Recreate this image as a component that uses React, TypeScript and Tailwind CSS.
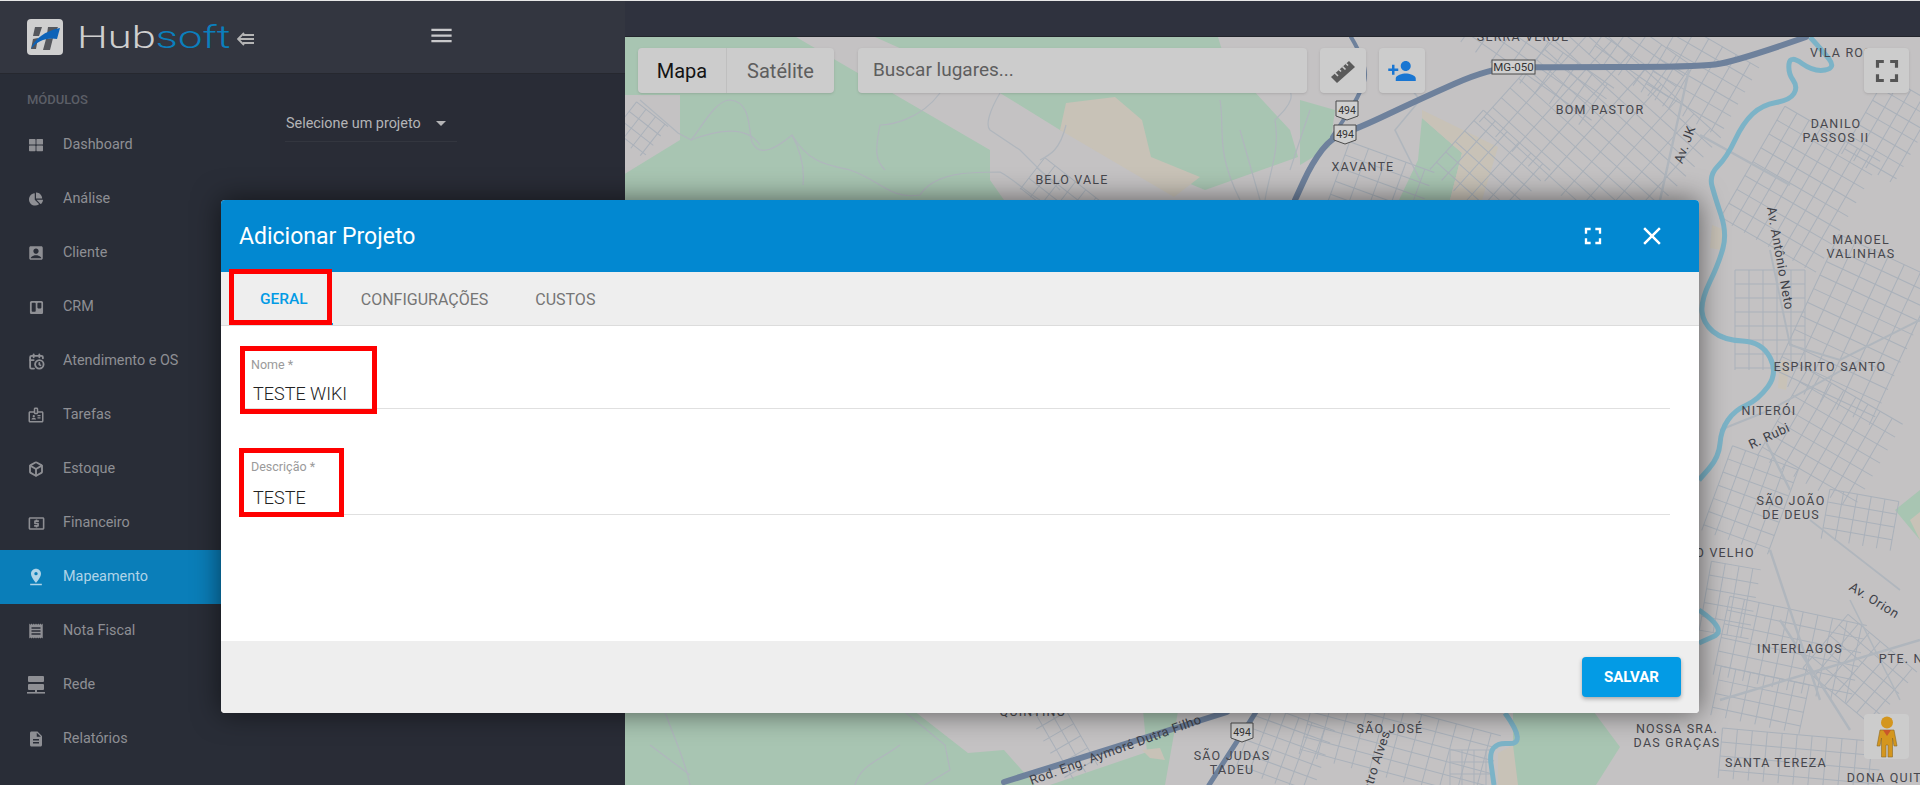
import React from 'react';
import { Box, CalendarClock } from 'lucide-react';
import {
    MdAccountBox,
    MdClose,
    MdDescription,
    MdFullscreen,
    MdMenu,
    MdOutlineBadge,
    MdOutlineLocalAtm,
    MdPersonAdd,
    MdPinDrop,
    MdReceipt,
} from 'react-icons/md';
import { FaChartPie, FaThLarge, FaTrello } from 'react-icons/fa';

const RedeIcon = () => (
    <svg width="20" height="20" viewBox="0 0 20 20" fill="currentColor">
        <rect x="2" y="1" width="16" height="6" rx="1" />
        <rect x="2" y="9" width="16" height="6" rx="1" />
        <rect x="9" y="15" width="2" height="3" />
        <rect x="1" y="17" width="18" height="1.6" />
    </svg>
);

const RulerIcon = () => (
    <svg width="26" height="26" viewBox="0 0 26 26" fill="#5a5a5a">
        <path d="M1,19 L19,3 L25,9 L7,25 Z" />
        <path d="M5,15 L8,18 M9,11.5 L11,13.5 M12.5,8.5 L15.5,11.5 M16,5.5 L18,7.5" stroke="#cccccc" strokeWidth="1.6" />
    </svg>
);

const menuItems = [
    { label: 'Dashboard', icon: <FaThLarge size={14} /> },
    { label: 'Análise', icon: <FaChartPie size={14} /> },
    { label: 'Cliente', icon: <MdAccountBox size={18} /> },
    { label: 'CRM', icon: <FaTrello size={15} /> },
    { label: 'Atendimento e OS', icon: <CalendarClock size={17} strokeWidth={2.6} /> },
    { label: 'Tarefas', icon: <MdOutlineBadge size={18} /> },
    { label: 'Estoque', icon: <Box size={16} strokeWidth={2.8} /> },
    { label: 'Financeiro', icon: <MdOutlineLocalAtm size={19} /> },
    { label: 'Mapeamento', icon: <MdPinDrop size={20} />, active: true },
    { label: 'Nota Fiscal', icon: <MdReceipt size={18} /> },
    { label: 'Rede', icon: <RedeIcon /> },
    { label: 'Relatórios', icon: <MdDescription size={18} /> },
];

// cx, cy, w, h, angle, step x, step y
const streetGrids = [
    [1600, 130, 190, 150, 42, 22, 13],
    [1490, 170, 90, 80, 42, 16, 14],
    [1380, 190, 90, 70, 20, 20, 14],
    [1530, 60, 170, 50, 35, 18, 13],
    [1640, 60, 90, 50, 35, 18, 13],
    [1700, 80, 90, 80, 30, 16, 14],
    [1800, 190, 110, 130, 30, 14, 16],
    [1855, 330, 110, 160, 25, 18, 15],
    [1770, 320, 70, 100, 0, 14, 14],
    [1890, 130, 60, 90, 30, 14, 14],
    [1830, 440, 110, 100, 30, 14, 15],
    [1750, 500, 70, 90, 20, 14, 14],
    [1860, 520, 70, 50, 10, 14, 13],
    [1730, 600, 50, 70, 10, 14, 14],
    [1790, 650, 140, 80, 12, 15, 14],
    [1760, 700, 90, 50, 12, 15, 14],
    [1860, 670, 90, 70, 40, 14, 14],
    [1800, 760, 160, 50, 5, 15, 14],
    [1400, 745, 190, 70, 15, 18, 13],
    [1470, 770, 40, 40, 0, 12, 12],
    [1285, 750, 80, 70, 20, 14, 13],
    [1060, 735, 90, 35, 60, 14, 14],
    [1060, 195, 70, 40, 38, 13, 13],
    [640, 130, 40, 40, 38, 12, 12],
];

const mapLabels: [string, number, number][] = [
    ['SERRA VERDE', 1523, 41],
    ['VILA ROSA', 1846, 57],
    ['BOM PASTOR', 1600, 114],
    ['DANILO', 1836, 128],
    ['PASSOS II', 1836, 142],
    ['XAVANTE', 1363, 171],
    ['BELO VALE', 1072, 184],
    ['MANOEL', 1861, 244],
    ['VALINHAS', 1861, 258],
    ['ESPIRITO SANTO', 1830, 371],
    ['NITERÓI', 1769, 415],
    ['SÃO JOÃO', 1791, 505],
    ['DE DEUS', 1791, 519],
    ['O VELHO', 1725, 557],
    ['INTERLAGOS', 1800, 653],
    ['PTE. NOVA', 1915, 663],
    ['QUINTINO', 1033, 716],
    ['SÃO JOSÉ', 1390, 733],
    ['NOSSA SRA.', 1677, 733],
    ['DAS GRAÇAS', 1677, 747],
    ['SÃO JUDAS', 1232, 760],
    ['TADEU', 1232, 774],
    ['SANTA TEREZA', 1776, 767],
    ['DONA QUITÉRIA', 1900, 782],
];

const roadLabels: [string, number, number, number][] = [
    ['Av. JK', 1689, 146, -70],
    ['Av. Antônio Neto', 1776, 259, 80],
    ['R. Rubi', 1771, 440, -25],
    ['Av. Orion', 1872, 604, 32],
    ['Castro Alves', 1378, 770, -72],
    ['Rod. Eng. Aymoré Dutra Filho', 1117, 754, -20],
];

// rounds a list of points into a curve through the midpoints
const smooth = (points: number[][]) => {
    let d = `M${points[0][0]},${points[0][1]}`;
    for (let i = 1; i < points.length - 1; i++) {
        const mx = (points[i][0] + points[i + 1][0]) / 2;
        const my = (points[i][1] + points[i + 1][1]) / 2;
        d += ` Q${points[i][0]},${points[i][1]} ${mx},${my}`;
    }
    const last = points[points.length - 1];
    return `${d} L${last[0]},${last[1]}`;
};

const river = [
    [1810, 37], [1822, 50], [1836, 68], [1814, 72], [1790, 55], [1788, 73], [1798, 87], [1790, 100], [1762, 105], [1743, 123],
    [1727, 157], [1709, 175], [1715, 197], [1727, 233], [1719, 263], [1701, 300], [1703, 323], [1723, 340], [1762, 342],
    [1778, 373], [1758, 400], [1735, 410], [1721, 430], [1719, 457], [1699, 480],
];

const Shield = ({ x, y }: { x: number; y: number }) => (
    <g transform={`translate(${x} ${y})`}>
        <path d="M-11,-9 H11 V6 L0,10 L-11,6 Z" fill="#cfcfcf" stroke="#4b4b4b" strokeWidth="1" />
        <text textAnchor="middle" y="4" fontSize="10.5" fill="#333">494</text>
    </g>
);

const MapBackground = () => (
    <svg className="h-full w-full" viewBox="625 37 1295 748" fontFamily="Roboto, sans-serif">
        <rect x="623" y="37" width="1297" height="748" fill="#c4c2c3" />
        <g fill="#a8c5b2">
            <polygon points="623,37 796,37 990,150 990,180 1004,200 1004,240 623,240 623,175 680,140 680,95 623,95" />
            <polygon points="875,37 1218,37 1225,60 1290,130 1298,157 1205,190 1060,130 1000,93" />
            <polygon points="1422,118 1462,153 1450,200 1399,200 1418,160" />
            <polygon points="1300,100 1335,110 1330,147 1300,165" />
            <polygon points="623,700 900,700 968,753 1004,750 1035,785 623,785" />
            <polygon points="1142,700 1180,700 1165,785 1050,785 1147,752" />
            <polygon points="1513,700 1585,700 1620,747 1596,785 1513,785" />
            <polygon points="1895,510 1920,490 1920,540" />
        </g>
        <g fill="#c8c2b7">
            <polygon points="1066,103 1115,97 1142,120 1151,157 1200,177 1174,197 1060,130" />
            <polygon points="1422,110 1498,147 1482,200 1450,200 1462,153 1422,118" />
            <polygon points="1498,753 1513,745 1518,785 1498,785" />
            <polygon points="1142,750 1160,748 1165,760 1150,758" />
            <polygon points="1910,520 1920,512 1920,540" />
            <polygon points="1712,225 1725,230 1722,250 1710,248" />
            <polygon points="1780,360 1790,362 1786,390 1778,388" />
        </g>
        <g stroke="#aab1ba" strokeWidth="1">
            {streetGrids.map(([cx, cy, w, h, angle, sx, sy], i) => (
                <g key={i} transform={`rotate(${angle} ${cx} ${cy})`}>
                    {Array.from({ length: Math.floor(w / sx) + 1 }, (_, n) => (
                        <line key={n} x1={cx - w / 2 + n * sx} y1={cy - h / 2} x2={cx - w / 2 + n * sx} y2={cy + h / 2} />
                    ))}
                    {Array.from({ length: Math.floor(h / sy) + 1 }, (_, n) => (
                        <line key={n} x1={cx - w / 2} y1={cy - h / 2 + n * sy} x2={cx + w / 2} y2={cy - h / 2 + n * sy} />
                    ))}
                </g>
            ))}
        </g>
        <g fill="none" stroke="#b0b6bd" strokeWidth="1.2">
            <path d="M640,100 L678,133 L691,140 C700,130 715,100 730,100 C752,102 748,130 752,142 C760,160 780,145 792,135 C810,165 830,165 850,170 C880,180 890,200 920,195 C935,172 970,172 1000,172 C1015,180 1030,195 1040,200" />
            <path d="M691,140 C730,125 750,130 760,145 M792,135 C800,150 805,165 803,185" />
            <path d="M940,93 C920,120 890,125 880,125 C875,150 875,160 885,170 M1000,93 C990,110 985,125 990,130 L1020,150 L1060,190" />
            <path d="M1066,125 C1060,150 1050,155 1040,160 M1220,100 C1225,130 1215,150 1240,200" />
            <path d="M1280,75 C1300,95 1290,105 1275,120 C1280,150 1270,170 1265,200" />
            <path d="M1240,130 L1260,200 M1310,110 L1290,170" />
            <path d="M665,712 C675,740 685,760 690,785 M650,745 L690,775 M900,745 C880,760 860,765 855,785 M905,712 L945,745 L950,770 L925,785" />
            <path d="M1400,75 L1420,100 L1395,130 L1420,180 M1850,600 L1900,700 M1810,520 L1900,590" strokeWidth="1.6" />
            <path d="M1689,70 L1660,200 M1700,135 L1790,185 M1765,440 L1790,490 M1780,620 L1850,730 M1770,550 L1820,700 M1720,700 L1920,640" strokeWidth="2.4" />
            <path d="M1770,250 L1790,345 L1840,360 L1920,320 M1720,430 L1770,410 L1860,360" strokeWidth="2" />
        </g>
        <g fill="none" stroke="#7cb3c7" strokeWidth="5" strokeLinejoin="round">
            <path d={smooth(river)} />
            <path d={smooth([[1699, 610], [1728, 630], [1699, 643]])} />
            <path d={smooth([[1505, 713], [1528, 745], [1488, 742], [1494, 785]])} />
        </g>
        <g fill="none" stroke="#6e819c" strokeLinejoin="round" strokeLinecap="round">
            <path d={smooth([[1806, 37], [1735, 62], [1695, 67], [1537, 67], [1490, 68], [1418, 100], [1359, 128], [1332, 137], [1312, 163], [1295, 200]])} strokeWidth="6" />
            <path d={smooth([[1351, 37], [1369, 67], [1359, 97], [1332, 137]])} strokeWidth="4" />
            <path d="M1227,712 L1004,782" strokeWidth="6" />
            <path d="M1256,712 L1209,785" strokeWidth="5" />
        </g>
        <g fill="#47474d" fontSize="12.5" letterSpacing="1.2" textAnchor="middle">
            {mapLabels.map(([text, x, y]) => (
                <text key={text} x={x} y={y}>{text}</text>
            ))}
        </g>
        <g fill="#3d3f47" fontSize="13" letterSpacing="0.5" textAnchor="middle">
            {roadLabels.map(([text, x, y, angle]) => (
                <text key={text} x={x} y={y} transform={`rotate(${angle} ${x} ${y})`}>{text}</text>
            ))}
        </g>
        <Shield x={1347} y={110} />
        <Shield x={1345} y={134} />
        <Shield x={1242} y={732} />
        <rect x="1492" y="60" width="43" height="14" fill="#cfcfcf" stroke="#4b4b4b" />
        <text x="1513.5" y="71" textAnchor="middle" fontSize="11.5" fill="#333">MG-050</text>
    </svg>
);

const Pegman = () => (
    <svg width="22" height="42" viewBox="0 0 22 42">
        <circle cx="11" cy="6.5" r="6" fill="#d4961e" />
        <path d="M4,14 H18 L21,30 H18 L16.5,22 V41 H12 V29 H10 V41 H5.5 V22 L4,30 H1 Z" fill="#d4961e" stroke="#8a6a25" strokeWidth="0.6" />
        <path d="M7,14 H15 L11,20 Z" fill="#c9572a" />
    </svg>
);

const RedBox = ({ className }: { className: string }) => (
    <div className={`absolute border-[5px] border-[#ff0000] ${className}`} />
);

export default function App() {
    return (
        <div className="relative flex h-[785px] w-[1920px] flex-col overflow-hidden bg-[#292c36] font-[Roboto,sans-serif]">
            <div className="h-px bg-[#e8e8e8]" />
            <div className="flex flex-1">
                {/* Sidebar */}
                <aside className="w-[270px] shrink-0 bg-[#292d37]">
                    <div className="flex h-[73px] items-center border-b border-[#26282f] bg-[#333640] pl-[27px]">
                        <svg width="36" height="36" viewBox="0 0 36 36">
                            <rect width="36" height="36" rx="4" fill="#cfcfcf" />
                            <path d="M8,8 H15 L12,17 H6 Z M21,8 H31 L29,12 L20,15 Z M19,20 L26,19 L23,31 H16 Z M6,20 L11,19 L9,30 H4 Z" fill="#55575c" />
                            <path d="M4,30 C7,20 18,12 33,9 L30,20 C20,18 10,22 4,30 Z" fill="#0d63b8" />
                        </svg>
                        <div className="ml-[14px] w-[146px] origin-left scale-x-[1.36] text-[32px] leading-none font-light text-[#cfcfcf]">
                            Hub<span className="text-[#0b7fbd]">soft</span>
                        </div>
                        <svg className="mt-[3px] ml-[14px]" width="18" height="14" viewBox="0 0 18 14" fill="none" stroke="#b5b5b5" strokeWidth="1.8">
                            <path d="M7,1 L1,7 L7,13 M1,7 H17 M6,3 H17 M6,11 H17" />
                        </svg>
                    </div>
                    <div className="flex h-[44px] items-end pb-[9px] pl-[27px] text-[13px] font-medium text-[#5c5f67]">MÓDULOS</div>
                    <nav>
                        {menuItems.map((item) => (
                            <div
                                key={item.label}
                                className={`flex h-[54px] items-center text-[14.4px] ${item.active ? 'bg-[#0a7eb9] text-[#b0d4e8]' : 'text-[#8e8f94]'}`}
                            >
                                <span className="flex w-[63px] shrink-0 justify-center pr-[9px] pl-[18px]">{item.icon}</span>
                                {item.label}
                            </div>
                        ))}
                    </nav>
                </aside>

                {/* Project panel */}
                <section className="w-[355px] shrink-0 bg-[#292c36]">
                    <div className="flex h-[73px] items-center justify-center border-b border-[#26282f] bg-[#333640] pr-[12px] pb-[3px]">
                        <MdMenu size={27} className="text-[#c9c9cb]" />
                    </div>
                    <div className="mt-[35px] ml-[15px] flex h-[33px] w-[172px] items-center justify-between border-b border-[#33363f] pb-[3px] pr-[11px] text-[14.4px] text-[#b4b4b6]">
                        <span className="pl-px">Selecione um projeto</span>
                        <span className="h-0 w-0 border-x-[5px] border-t-[5px] border-x-transparent border-t-[#b4b4b6]" />
                    </div>
                </section>

                {/* Map */}
                <main className="flex min-w-0 flex-1 flex-col">
                    <div className="h-[36px] border-b border-[#23252c] bg-[#2f323e]" />
                    <div className="relative flex-1">
                        <MapBackground />
                        <div className="absolute top-[11px] right-[11px] left-[13px] flex h-[45px] text-[#5e5e5e]">
                            <div className="flex w-[196px] overflow-hidden rounded bg-[#cccccc] text-[20px] shadow-sm">
                                <div className="flex w-[89px] items-center justify-center border-r border-[#bfbfbf] text-[#141414]">Mapa</div>
                                <div className="flex flex-1 items-center justify-center">Satélite</div>
                            </div>
                            <div className="ml-[24px] flex w-[449px] items-center rounded bg-[#cccccc] pl-[15px] text-[19px] shadow-sm">Buscar lugares...</div>
                            <div className="ml-[13px] flex w-[46px] items-center justify-center rounded bg-[#cccccc] shadow-sm">
                                <RulerIcon />
                            </div>
                            <div className="ml-[13px] flex w-[46px] items-center justify-center rounded bg-[#cccccc] shadow-sm">
                                <MdPersonAdd size={30} className="text-[#1976d2]" />
                            </div>
                            <div className="ml-auto flex w-[45px] items-center justify-center rounded bg-[#cccccc] shadow-sm">
                                <MdFullscreen size={38} className="text-[#555]" />
                            </div>
                        </div>
                        <div className="absolute right-[11px] bottom-[26px] flex h-[45px] w-[45px] items-center justify-center rounded bg-[#cccccc]">
                            <Pegman />
                        </div>
                    </div>
                </main>
            </div>

            {/* Adicionar Projeto */}
            <div className="absolute top-[200px] left-[221px] flex h-[513px] w-[1478px] flex-col overflow-hidden rounded bg-white shadow-[0_0_28px_rgba(0,0,0,0.55)]">
                <div className="flex h-[72px] shrink-0 items-center justify-between bg-[#0288d1] pr-[32px] pl-[18px] text-white">
                    <h2 className="text-[23px] leading-none">Adicionar Projeto</h2>
                    <div className="flex items-center gap-[30px]">
                        <MdFullscreen size={28} />
                        <MdClose size={30} />
                    </div>
                </div>
                <div className="relative flex h-[54px] shrink-0 items-center border-b border-[#dcdcdc] bg-[#eeeeee] pt-[2px] text-[16px] text-[#757575]">
                    <div className="absolute bottom-0 left-[9px] h-[2px] w-[103px] bg-[#039be5]" />
                    <span className="ml-[39px] text-[15.5px] font-medium text-[#039be5]">GERAL</span>
                    <span className="ml-[53px]">CONFIGURAÇÕES</span>
                    <span className="ml-[47px]">CUSTOS</span>
                </div>
                <div className="flex-1 pr-[29px] pl-[19px]">
                    <div className="mt-[18px] h-[65px] border-b border-[#e0e0e0] pt-[11px]">
                        <div className="pl-[11px] text-[12.5px] leading-[20px] text-[#9a9a9a]">Nome *</div>
                        <div className="mt-[8px] pl-[13px] text-[18px] leading-[22px] font-light text-[#222222]">TESTE WIKI</div>
                    </div>
                    <div className="mt-[40px] h-[66px] border-b border-[#e0e0e0] pt-[8px]">
                        <div className="pl-[11px] text-[12.5px] leading-[20px] text-[#9a9a9a]">Descrição *</div>
                        <div className="mt-[10px] pl-[13px] text-[18px] leading-[22px] font-light text-[#222222]">TESTE</div>
                    </div>
                </div>
                <div className="flex h-[72px] shrink-0 items-center justify-end bg-[#eeeeee] pr-[18px]">
                    <button className="h-[40px] w-[99px] rounded bg-[#039be5] text-[15px] font-bold text-white shadow-[0_2px_4px_rgba(0,0,0,0.3)]">SALVAR</button>
                </div>
                <RedBox className="top-[69px] left-[8px] h-[56px] w-[103px]" />
                <RedBox className="top-[146px] left-[19px] h-[68px] w-[137px]" />
                <RedBox className="top-[248px] left-[18px] h-[69px] w-[105px]" />
            </div>
        </div>
    );
}
